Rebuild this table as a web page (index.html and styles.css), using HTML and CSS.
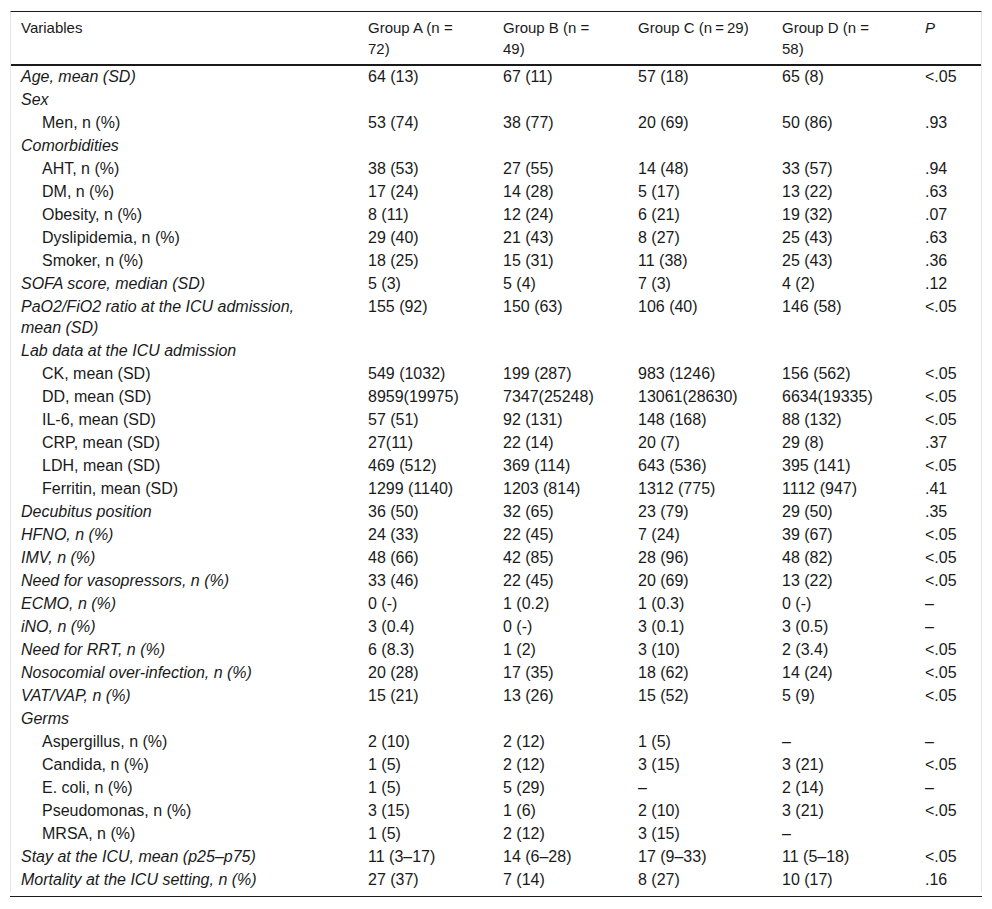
FILE: index.html
```html
<!DOCTYPE html>
<html>
<head>
<meta charset="utf-8">
<link rel="stylesheet" href="styles.css">
</head>
<body>
<div class="frame">
<table class="data">
<colgroup>
<col class="c-var"><col class="c-a"><col class="c-b"><col class="c-c"><col class="c-d"><col class="c-p">
</colgroup>
<thead>
<tr>
<th class="var">Variables</th>
<th>Group A (n = 72)</th>
<th>Group B (n = 49)</th>
<th>Group C (n&#8201;=&#8201;29)</th>
<th class="narrow">Group D (n = 58)</th>
<th><i>P</i></th>
</tr>
</thead>
<tbody>
<tr><td class="var it">Age, mean (SD)</td><td>64 (13)</td><td>67 (11)</td><td>57 (18)</td><td>65 (8)</td><td>&lt;.05</td></tr>
<tr><td class="var it">Sex</td><td></td><td></td><td></td><td></td><td></td></tr>
<tr><td class="var sub">Men, n (%)</td><td>53 (74)</td><td>38 (77)</td><td>20 (69)</td><td>50 (86)</td><td>.93</td></tr>
<tr><td class="var it">Comorbidities</td><td></td><td></td><td></td><td></td><td></td></tr>
<tr><td class="var sub">AHT, n (%)</td><td>38 (53)</td><td>27 (55)</td><td>14 (48)</td><td>33 (57)</td><td>.94</td></tr>
<tr><td class="var sub">DM, n (%)</td><td>17 (24)</td><td>14 (28)</td><td>5 (17)</td><td>13 (22)</td><td>.63</td></tr>
<tr><td class="var sub">Obesity, n (%)</td><td>8 (11)</td><td>12 (24)</td><td>6 (21)</td><td>19 (32)</td><td>.07</td></tr>
<tr><td class="var sub">Dyslipidemia, n (%)</td><td>29 (40)</td><td>21 (43)</td><td>8 (27)</td><td>25 (43)</td><td>.63</td></tr>
<tr><td class="var sub">Smoker, n (%)</td><td>18 (25)</td><td>15 (31)</td><td>11 (38)</td><td>25 (43)</td><td>.36</td></tr>
<tr><td class="var it">SOFA score, median (SD)</td><td>5 (3)</td><td>5 (4)</td><td>7 (3)</td><td>4 (2)</td><td>.12</td></tr>
<tr><td class="var it">PaO2/FiO2 ratio at the ICU admission, mean (SD)</td><td>155 (92)</td><td>150 (63)</td><td>106 (40)</td><td>146 (58)</td><td>&lt;.05</td></tr>
<tr><td class="var it">Lab data at the ICU admission</td><td></td><td></td><td></td><td></td><td></td></tr>
<tr><td class="var sub">CK, mean (SD)</td><td>549 (1032)</td><td>199 (287)</td><td>983 (1246)</td><td>156 (562)</td><td>&lt;.05</td></tr>
<tr><td class="var sub">DD, mean (SD)</td><td>8959(19975)</td><td>7347(25248)</td><td>13061(28630)</td><td>6634(19335)</td><td>&lt;.05</td></tr>
<tr><td class="var sub">IL-6, mean (SD)</td><td>57 (51)</td><td>92 (131)</td><td>148 (168)</td><td>88 (132)</td><td>&lt;.05</td></tr>
<tr><td class="var sub">CRP, mean (SD)</td><td>27(11)</td><td>22 (14)</td><td>20 (7)</td><td>29 (8)</td><td>.37</td></tr>
<tr><td class="var sub">LDH, mean (SD)</td><td>469 (512)</td><td>369 (114)</td><td>643 (536)</td><td>395 (141)</td><td>&lt;.05</td></tr>
<tr><td class="var sub">Ferritin, mean (SD)</td><td>1299 (1140)</td><td>1203 (814)</td><td>1312 (775)</td><td>1112 (947)</td><td>.41</td></tr>
<tr><td class="var it">Decubitus position</td><td>36 (50)</td><td>32 (65)</td><td>23 (79)</td><td>29 (50)</td><td>.35</td></tr>
<tr><td class="var it">HFNO, n (%)</td><td>24 (33)</td><td>22 (45)</td><td>7 (24)</td><td>39 (67)</td><td>&lt;.05</td></tr>
<tr><td class="var it">IMV, n (%)</td><td>48 (66)</td><td>42 (85)</td><td>28 (96)</td><td>48 (82)</td><td>&lt;.05</td></tr>
<tr><td class="var it">Need for vasopressors, n (%)</td><td>33 (46)</td><td>22 (45)</td><td>20 (69)</td><td>13 (22)</td><td>&lt;.05</td></tr>
<tr><td class="var it">ECMO, n (%)</td><td>0 (-)</td><td>1 (0.2)</td><td>1 (0.3)</td><td>0 (-)</td><td>–</td></tr>
<tr><td class="var it">iNO, n (%)</td><td>3 (0.4)</td><td>0 (-)</td><td>3 (0.1)</td><td>3 (0.5)</td><td>–</td></tr>
<tr><td class="var it">Need for RRT, n (%)</td><td>6 (8.3)</td><td>1 (2)</td><td>3 (10)</td><td>2 (3.4)</td><td>&lt;.05</td></tr>
<tr><td class="var it">Nosocomial over-infection, n (%)</td><td>20 (28)</td><td>17 (35)</td><td>18 (62)</td><td>14 (24)</td><td>&lt;.05</td></tr>
<tr><td class="var it">VAT/VAP, n (%)</td><td>15 (21)</td><td>13 (26)</td><td>15 (52)</td><td>5 (9)</td><td>&lt;.05</td></tr>
<tr><td class="var it">Germs</td><td></td><td></td><td></td><td></td><td></td></tr>
<tr><td class="var sub">Aspergillus, n (%)</td><td>2 (10)</td><td>2 (12)</td><td>1 (5)</td><td>–</td><td>–</td></tr>
<tr><td class="var sub">Candida, n (%)</td><td>1 (5)</td><td>2 (12)</td><td>3 (15)</td><td>3 (21)</td><td>&lt;.05</td></tr>
<tr><td class="var sub">E. coli, n (%)</td><td>1 (5)</td><td>5 (29)</td><td>–</td><td>2 (14)</td><td>–</td></tr>
<tr><td class="var sub">Pseudomonas, n (%)</td><td>3 (15)</td><td>1 (6)</td><td>2 (10)</td><td>3 (21)</td><td>&lt;.05</td></tr>
<tr><td class="var sub">MRSA, n (%)</td><td>1 (5)</td><td>2 (12)</td><td>3 (15)</td><td>–</td><td></td></tr>
<tr><td class="var it">Stay at the ICU, mean (p25–p75)</td><td>11 (3–17)</td><td>14 (6–28)</td><td>17 (9–33)</td><td>11 (5–18)</td><td>&lt;.05</td></tr>
<tr><td class="var it">Mortality at the ICU setting, n (%)</td><td>27 (37)</td><td>7 (14)</td><td>8 (27)</td><td>10 (17)</td><td>.16</td></tr>
</tbody>
</table>
</div>
<div class="bottom-rule"></div>
</body>
</html>
```
FILE: styles.css
```css
html, body {
  margin: 0;
  padding: 0;
  background: #ffffff;
}
body {
  font-family: "Liberation Sans", Arial, sans-serif;
  color: #1a1a1a;
  padding-top: 11px;
}
.frame {
  margin-left: 10px;
  width: 970px;
  border-top: 1px solid #1a1a1a;
  border-left: 1px solid #e6e6e6;
  border-right: 1px solid #e6e6e6;
}
.data {
  width: 970px;
  border-collapse: collapse;
  table-layout: fixed;
}
.c-var { width: 347px; }
.c-a { width: 135px; }
.c-b { width: 135px; }
.c-c { width: 144px; }
.c-d { width: 143px; }
.c-p { width: 66px; }
.data th {
  font-weight: normal;
  font-size: 15px;
  line-height: 21px;
  text-align: left;
  vertical-align: top;
  padding: 5px 20px 5px 10px;
  border-bottom: 2px solid #1a1a1a;
}
.data th.narrow {
  padding-right: 28px;
}
.data th.var {
  padding-right: 40px;
}
.data td {
  font-size: 16px;
  line-height: 21px;
  text-align: left;
  vertical-align: top;
  padding: 0 20px 2px 10px;
  white-space: nowrap;
}
.data td.var {
  white-space: normal;
  padding-right: 40px;
}
.data td.it {
  font-style: italic;
}
.data td.sub {
  padding-left: 31px;
}
.bottom-rule {
  margin: 4px 0 0 10px;
  width: 972px;
  height: 0;
  border-top: 1px solid #1a1a1a;
}
```
